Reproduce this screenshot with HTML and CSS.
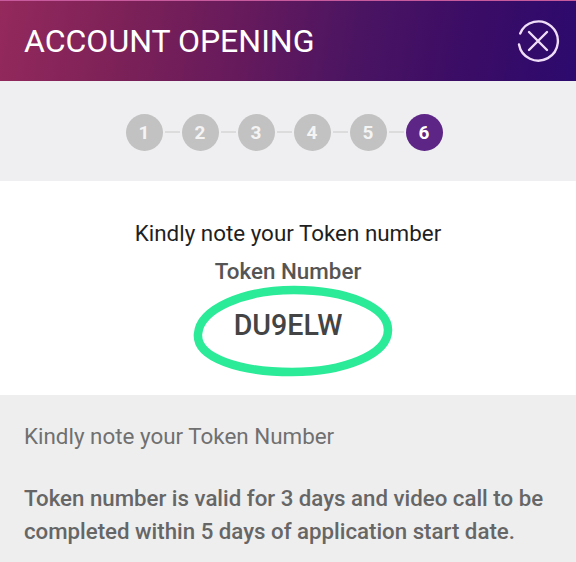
FILE: index.html
```html
<!DOCTYPE html>
<html lang="en">
<head>
<meta charset="utf-8">
<title>Account Opening</title>
<link rel="stylesheet" href="styles.css">
</head>
<body>
<div class="app">
  <header class="header">
    <h1 class="title">ACCOUNT OPENING</h1>
    <svg class="close" viewBox="0 0 44 44" aria-label="Close">
      <path class="close-line" d="M4.2 14.5A19.6 19.6 0 1 1 3 25.5"/>
      <path class="close-line" d="M13 13L31 31M31 13L13 31"/>
    </svg>
  </header>
  <nav class="steps">
    <span class="step">1</span><span class="link"></span>
    <span class="step">2</span><span class="link"></span>
    <span class="step">3</span><span class="link"></span>
    <span class="step">4</span><span class="link"></span>
    <span class="step">5</span><span class="link"></span>
    <span class="step active">6</span>
  </nav>
  <main class="token">
    <p class="note">Kindly note your Token number</p>
    <p class="label">Token Number</p>
    <div class="value-wrap">
      <p class="value">DU9ELW</p>
      <svg class="ring" viewBox="0 0 200 92" aria-hidden="true">
        <path d="M5 49C7 24 50 5 101 5C154 5 195 22 195 45C195 70 150 87 99 87C47 87 3 73 5 49Z"/>
      </svg>
    </div>
  </main>
  <section class="info">
    <p class="info-note">Kindly note your Token Number</p>
    <p class="info-strong">Token number is valid for 3 days and video call to be completed within 5 days of application start date.</p>
  </section>
</div>
</body>
</html>
```
FILE: styles.css
```css
* { box-sizing: border-box; }
html, body { margin: 0; padding: 0; }
body { background: #fff; font-family: Roboto, "Noto Sans", sans-serif; }
p, h1 { margin: 0; }
.app { width: 576px; height: 562px; overflow: hidden; display: flex; flex-direction: column; }
.header {
  height: 81px;
  flex: none;
  padding: 0 16px 0 24px;
  display: flex;
  align-items: center;
  justify-content: space-between;
  background: linear-gradient(100deg, #94295c 0%, #7c2158 22%, #661a5c 42%, #4a1462 62%, #3a0c66 82%, #2c0a6e 100%);
  border-top: 1px solid #c75a9c;
}
.title { font-size: 32px; font-weight: 400; color: #fff; letter-spacing: 0; }
.close { width: 44px; height: 44px; display: block; }
.close-line { fill: none; stroke: #f0def8; stroke-width: 2.4; stroke-linecap: round; }
.steps {
  height: 100px;
  flex: none;
  background: #efeff1;
  display: flex;
  align-items: center;
  justify-content: center;
  padding: 2px 8px 0 0;
}
.step {
  width: 37px;
  height: 37px;
  border-radius: 50%;
  background: #c2c2c2;
  color: #f4f4f4;
  font-size: 19px;
  font-weight: 700;
  display: flex;
  align-items: center;
  justify-content: center;
}
.step.active { background: #5d2585; color: #fff; }
.link { width: 15px; height: 2px; margin: 0 2px; background: #dcdcdc; }
.token {
  height: 214px;
  flex: none;
  background: #fff;
  display: flex;
  flex-direction: column;
  align-items: center;
  padding-top: 38px;
}
.note { font-size: 22.4px; line-height: 28px; color: #1f1f1f; }
.label { font-size: 22.4px; line-height: 28px; margin-top: 10px; font-weight: 500; color: #555; }
.value-wrap { position: relative; width: 200px; height: 92px; margin: 0 0 0 10px; display: flex; align-items: center; justify-content: center; }
.value { font-size: 28.6px; font-weight: 500; color: #444; line-height: 32px; margin: -12px 10px 0 0; }
.ring { position: absolute; inset: 0; width: 200px; height: 92px; }
.ring path { fill: none; stroke: #2bea98; stroke-width: 8.5; }
.info {
  flex: 1;
  background: #eeeeef;
  padding: 27px 24px 0;
}
.info-note { font-size: 22.4px; line-height: 28px; color: #707070; }
.info-strong { font-size: 22.25px; font-weight: 500; line-height: 33px; color: #666; margin-top: 32px; }
```
